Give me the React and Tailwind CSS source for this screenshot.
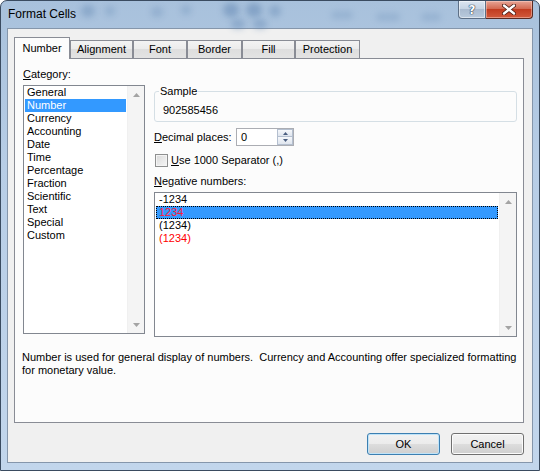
import React from "react";

const categories = [
  "General",
  "Number",
  "Currency",
  "Accounting",
  "Date",
  "Time",
  "Percentage",
  "Fraction",
  "Scientific",
  "Text",
  "Special",
  "Custom",
];

const tabs = [
  { label: "Number", w: "w-[56px]", active: true },
  { label: "Alignment", w: "w-[63px]" },
  { label: "Font", w: "w-[54px]" },
  { label: "Border", w: "w-[55px]" },
  { label: "Fill", w: "w-[53px]" },
  { label: "Protection", w: "w-[65px]" },
];

const negatives = [
  { t: "-1234", red: false },
  { t: "1234", red: true, sel: true },
  { t: "(1234)", red: false },
  { t: "(1234)", red: true },
];

function Arrow({ up }) {
  return (
    <svg width="7" height="4" viewBox="0 0 7 4" className="block">
      {up ? (
        <path d="M0 4 L3.5 0 L7 4 Z" fill="#a3a3a3" />
      ) : (
        <path d="M0 0 L7 0 L3.5 4 Z" fill="#a3a3a3" />
      )}
    </svg>
  );
}

function ScrollBar() {
  return (
    <div className="w-[17px] h-full flex flex-col justify-between bg-[#f4f4f4] border-l border-[#f0f0f0]">
      <div className="h-[17px] flex items-center justify-center">
        <Arrow up />
      </div>
      <div className="h-[17px] flex items-center justify-center">
        <Arrow />
      </div>
    </div>
  );
}

function Spot({ cls }) {
  return <div className={"absolute rounded-full bg-[#5f84b0] blur-[3px] " + cls} />;
}

export default function App() {
  return (
    <div className="w-[540px] h-[471px] relative overflow-hidden rounded-t-[7px] border border-[#3a4b60] bg-[linear-gradient(180deg,#a8c1dc,#b7cde6_35%,#c2d6ec)] flex flex-col font-['Liberation_Sans',Arial,sans-serif] text-[11px] leading-[13px] text-black">
      {/* title bar */}
      <div className="h-[27px] relative flex items-start">
        <Spot cls="left-[80px] top-[4px] w-[14px] h-[12px] opacity-40" />
        <Spot cls="left-[104px] top-[5px] w-[10px] h-[10px] opacity-30" />
        <Spot cls="left-[150px] top-[6px] w-[12px] h-[10px] opacity-30" />
        <Spot cls="left-[180px] top-[4px] w-[10px] h-[10px] opacity-30" />
        <Spot cls="left-[222px] top-[2px] w-[16px] h-[14px] opacity-50" />
        <Spot cls="left-[245px] top-[2px] w-[16px] h-[14px] opacity-50" />
        <Spot cls="left-[268px] top-[4px] w-[12px] h-[12px] opacity-40" />
        <Spot cls="left-[230px] top-[18px] w-[14px] h-[10px] opacity-40" />
        <Spot cls="left-[252px] top-[18px] w-[14px] h-[10px] opacity-40" />
        <Spot cls="left-[330px] top-[10px] w-[22px] h-[8px] opacity-25" />
        <Spot cls="left-[375px] top-[12px] w-[24px] h-[8px] opacity-25" />
        <Spot cls="left-[420px] top-[12px] w-[20px] h-[8px] opacity-25" />
        <div className="relative h-full flex items-center pl-[7px] text-[12px] leading-[15px]">
          Format Cells
        </div>
        <div className="relative ml-auto mr-[6px] flex">
          <div className="w-[28px] h-[18px] rounded-bl-[4px] border border-t-0 border-[#5d6f86] bg-[linear-gradient(180deg,#dce6f1,#c3d2e3_50%,#aabbd0_50%,#b9cadd)] flex items-center justify-center shadow-[inset_0_0_0_1px_rgba(255,255,255,0.5)]">
            <span className="font-['DejaVu_Sans',sans-serif] font-bold text-[12px] leading-[12px] text-white [text-shadow:0_0_1px_#24364f,0_0_1px_#24364f,0_0_1px_#24364f]">
              ?
            </span>
          </div>
          <div className="w-[47px] h-[18px] rounded-br-[4px] border border-t-0 border-l-0 border-[#5a2a22] bg-[linear-gradient(180deg,#e8a596,#d46a52_45%,#c23c20_50%,#d25a3c)] flex items-center justify-center shadow-[inset_0_0_0_1px_rgba(255,220,210,0.45)]">
            <svg width="14" height="11" viewBox="0 0 14 11">
              <path d="M2 1.5 L12 9.5 M12 1.5 L2 9.5" stroke="#4a1a12" strokeWidth="4" strokeLinecap="round" />
              <path d="M2 1.5 L12 9.5 M12 1.5 L2 9.5" stroke="#ffffff" strokeWidth="2.4" strokeLinecap="round" />
            </svg>
          </div>
        </div>
      </div>

      {/* client area */}
      <div className="mx-[6px] h-[435px] border border-[#8596ab] bg-[#f0f0f0] flex flex-col pl-[6px] pr-[8px] pt-[8px]">
        {/* tabs */}
        <div className="h-[21px] flex items-end">
          {tabs.map((t) =>
            t.active ? (
              <div
                key={t.label}
                className={t.w + " h-[22px] -mb-px relative z-10 border border-b-0 border-[#898c95] bg-[#fcfcfc] flex items-center justify-center"}
              >
                {t.label}
              </div>
            ) : (
              <div
                key={t.label}
                className={t.w + " h-[18px] border border-b-0 border-[#898c95] bg-[linear-gradient(180deg,#f3f3f3,#ebebeb_50%,#dedede_50%,#e3e3e3)] flex items-center justify-center"}
              >
                {t.label}
              </div>
            )
          )}
        </div>

        {/* panel */}
        <div className="w-[510px] h-[365px] border border-[#898c95] bg-[#fcfcfc] flex flex-col">
          <div className="flex pt-[9px] pl-[8px]">
            {/* left column */}
            <div className="w-[122px] flex flex-col">
              <div className="h-[13px]">
                <span className="underline underline-offset-[1px]">C</span>ategory:
              </div>
              <div className="mt-[4px] h-[249px] border border-[#828790] bg-white flex">
                <div className="flex-1 flex flex-col">
                  {categories.map((c) => (
                    <div
                      key={c}
                      className={
                        c === "Number"
                          ? "mx-px h-[13px] pl-[2px] bg-[#3399ff] text-white"
                          : "mx-px h-[13px] pl-[2px]"
                      }
                    >
                      {c}
                    </div>
                  ))}
                </div>
                <ScrollBar />
              </div>
            </div>

            {/* right column */}
            <div className="ml-[9px] w-[363px] flex flex-col pt-[17px]">
              <div className="mt-[6px] h-[31px] rounded-[3px] border border-[#d5dfe5] flex flex-col">
                <div className="-mt-[7px] ml-[4px] px-[1px] w-fit h-[13px] bg-[#fcfcfc]">Sample</div>
                <div className="mt-[6px] pl-[8px] h-[13px]">902585456</div>
              </div>

              <div className="mt-[6px] h-[18px] flex items-center">
                <div className="w-[82px]">
                  <span className="underline underline-offset-[1px]">D</span>ecimal places:
                </div>
                <div className="w-[58px] h-[18px] border border-[#abadb3] bg-white flex">
                  <div className="flex-1 pl-[4px] flex items-center">0</div>
                  <div className="w-[16px] flex flex-col">
                    <div className="h-[8px] border border-[#b4bfcf] bg-[linear-gradient(180deg,#f6f8fb,#dfe5ee)] flex items-center justify-center">
                      <svg width="5" height="3" viewBox="0 0 5 3" className="block">
                        <path d="M0 3 L2.5 0 L5 3 Z" fill="#4a5e80" />
                      </svg>
                    </div>
                    <div className="h-[8px] border border-t-0 border-[#b4bfcf] bg-[linear-gradient(180deg,#f6f8fb,#dfe5ee)] flex items-center justify-center">
                      <svg width="5" height="3" viewBox="0 0 5 3" className="block">
                        <path d="M0 0 L5 0 L2.5 3 Z" fill="#4a5e80" />
                      </svg>
                    </div>
                  </div>
                </div>
              </div>

              <div className="mt-[8px] h-[13px] flex items-center">
                <div className="ml-px w-[13px] h-[13px] border border-[#8e8f8f] bg-[linear-gradient(135deg,#d8d8d8,#f7f7f7)] shadow-[inset_0_0_0_1px_#f4f4f4]" />
                <div className="ml-[3px]">
                  <span className="underline underline-offset-[1px]">U</span>se 1000 Separator (,)
                </div>
              </div>

              <div className="mt-[8px] h-[13px]">
                <span className="underline underline-offset-[1px]">N</span>egative numbers:
              </div>
              <div className="mt-[4px] h-[145px] border border-[#828790] bg-white flex">
                <div className="flex-1 flex flex-col">
                  {negatives.map((n, i) => (
                    <div
                      key={i}
                      className={
                        n.sel
                          ? "mx-px h-[13px] pl-[2px] leading-[11px] bg-[#3399ff] border border-dotted border-black text-[#ff1a3a]"
                          : n.red
                          ? "mx-px h-[13px] pl-[3px] text-[#ff0000]"
                          : "mx-px h-[13px] pl-[3px]"
                      }
                    >
                      {n.t}
                    </div>
                  ))}
                </div>
                <ScrollBar />
              </div>
            </div>
          </div>

          <div className="mt-[14px] pl-[7px] whitespace-pre">
            {"Number is used for general display of numbers.  Currency and Accounting offer specialized formatting"}
            <br />
            {"for monetary value."}
          </div>
        </div>

        {/* buttons */}
        <div className="mt-[10px] flex justify-end gap-[11px]">
          <div className="w-[73px] h-[22px] rounded-[3px] border border-[#3c7fb1] bg-[linear-gradient(180deg,#f2f2f2,#ebebeb_50%,#dddddd_50%,#cfcfcf)] shadow-[inset_0_0_0_1px_#bfe3f8] flex items-center justify-center">
            OK
          </div>
          <div className="w-[73px] h-[22px] rounded-[3px] border border-[#707070] bg-[linear-gradient(180deg,#f2f2f2,#ebebeb_50%,#dddddd_50%,#cfcfcf)] shadow-[inset_0_0_0_1px_#fbfbfb] flex items-center justify-center">
            Cancel
          </div>
        </div>
      </div>
    </div>
  );
}
